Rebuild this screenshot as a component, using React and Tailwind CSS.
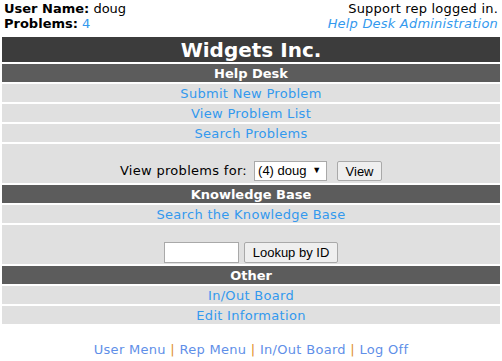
import React from 'react'

const link = 'text-[#3399ee]'

const Header = ({ children, big }) => (
  <div
    className={
      big
        ? 'h-[25px] bg-[#3c3c3c] text-white font-bold text-[20px] leading-[26px] text-center'
        : 'h-[18px] bg-[#5c5c5c] text-white font-bold text-[13px] leading-[19px] text-center'
    }
  >
    {children}
  </div>
)

const Row = ({ children }) => (
  <div className={`h-[18px] bg-[#e0e0e0] text-[13px] leading-[20px] tracking-[0.3px] text-center ${link}`}>
    <a href="#">{children}</a>
  </div>
)

const App = () => {
  return (
    <div className="w-[502px] h-[361px] bg-white text-black font-['DejaVu_Sans',Verdana,sans-serif] text-[13px]">
      {/* Top bar */}
      <div className="h-[35px] flex justify-between px-[4px] pt-[1px] leading-[15px]">
        <div>
          <div><b>User Name:</b> doug</div>
          <div><b>Problems:</b> <span className={link}>4</span></div>
        </div>
        <div className="text-right tracking-[0.2px]">
          <div>Support rep logged in.</div>
          <div className={`italic ${link}`}>Help Desk Administration</div>
        </div>
      </div>

      {/* Main table */}
      <div className="flex flex-col gap-[2px] px-[2px] pt-[2px]">
        <Header big>Widgets Inc.</Header>
        <Header>Help Desk</Header>
        <Row>Submit New Problem</Row>
        <Row>View Problem List</Row>
        <Row>Search Problems</Row>
        <div className="h-[39px] bg-[#e0e0e0] flex items-end justify-center pb-[2px]">
          <span className="mr-[7px] leading-[21px] tracking-[0.3px]">View problems for:</span>
          <div className="h-[20px] w-[73px] bg-white border border-[#a9a9a9] flex items-center justify-between pl-[3px] pr-[5px] font-['Liberation_Sans',Arial,sans-serif] text-[13px]">
            <span>(4) doug</span>
            <span className="text-[9px]">▼</span>
          </div>
          <button className="ml-[10px] h-[20px] w-[45px] bg-[#efefef] border border-[#a9a9a9] rounded-[2px] font-['Liberation_Sans',Arial,sans-serif] text-[13px]">
            View
          </button>
        </div>
        <Header>Knowledge Base</Header>
        <Row>Search the Knowledge Base</Row>
        <div className="h-[39px] bg-[#e0e0e0] flex items-end justify-center pb-[1px]">
          <div className="h-[21px] w-[75px] bg-white border border-[#a9a9a9]" />
          <button className="ml-[5px] h-[21px] w-[94px] bg-[#efefef] border border-[#a9a9a9] rounded-[2px] font-['Liberation_Sans',Arial,sans-serif] text-[13px]">
            Lookup by ID
          </button>
        </div>
        <Header>Other</Header>
        <Row>In/Out Board</Row>
        <Row>Edit Information</Row>
      </div>

      {/* Footer */}
      <div className="mt-[18px] text-center leading-[16px] tracking-[0.3px]">
        <a href="#" className="text-[#5f8fe8]">User Menu</a>
        <span className="text-[#e0902c]"> | </span>
        <a href="#" className="text-[#5f8fe8]">Rep Menu</a>
        <span className="text-[#e0902c]"> | </span>
        <a href="#" className="text-[#5f8fe8]">In/Out Board</a>
        <span className="text-[#e0902c]"> | </span>
        <a href="#" className="text-[#5f8fe8]">Log Off</a>
      </div>
    </div>
  )
}

export default App
